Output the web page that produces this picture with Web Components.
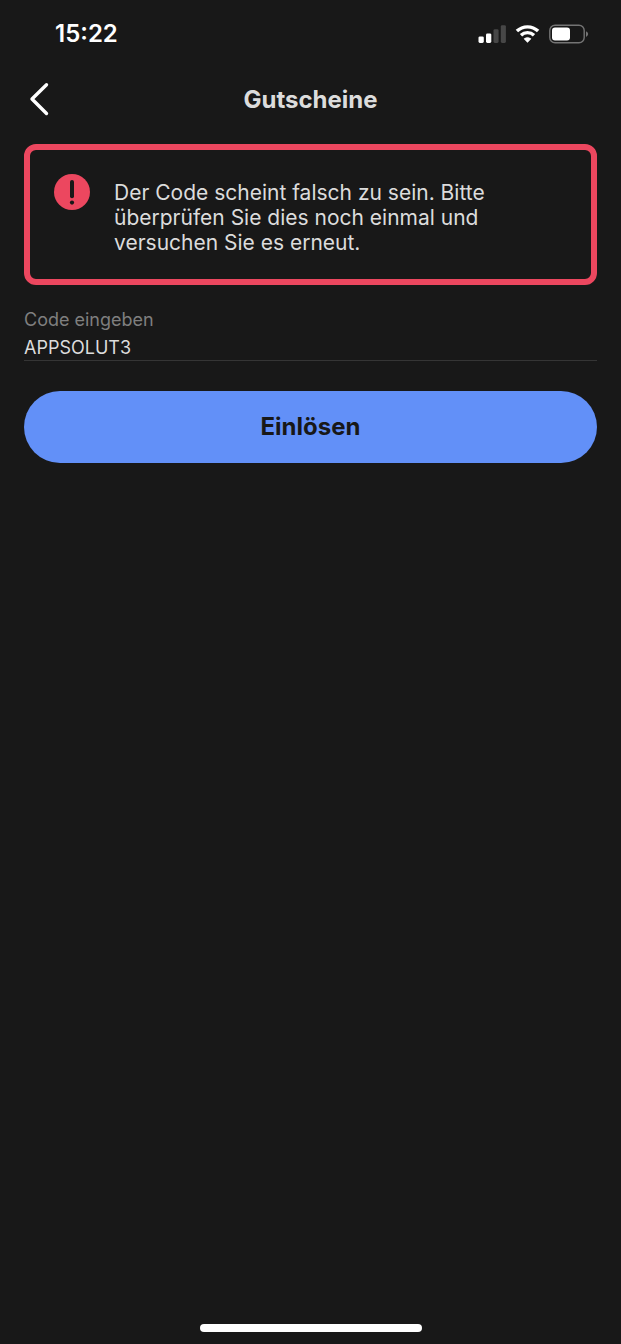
<!DOCTYPE html>
<html lang="de">
<head>
<meta charset="utf-8">
<meta name="viewport" content="width=device-width, initial-scale=1">
<title>Gutscheine</title>
<style>
html { background: #181818; }
body { margin: 0; font-family: Inter, "Liberation Sans", sans-serif; color: #dcdcdc; }
</style>
</head>
<body>
<voucher-screen>
  <status-bar slot="top">15:22</status-bar>
  <nav-header slot="top">Gutscheine</nav-header>
  <error-notice>Der Code scheint falsch zu sein. Bitte überprüfen Sie dies noch einmal und versuchen Sie es erneut.</error-notice>
  <code-field value="APPSOLUT3">Code eingeben</code-field>
  <primary-button>Einlösen</primary-button>
</voucher-screen>
<script>
const define = (name, html, setup) => {
  const template = document.createElement('template');
  template.innerHTML = html;
  customElements.define(name, class extends HTMLElement {
    constructor() {
      super();
      this.attachShadow({ mode: 'open' }).append(template.content.cloneNode(true));
    }
    connectedCallback() { if (setup) setup(this); }
  });
};

define('voucher-screen', `
<style>
:host { display: flex; flex-direction: column; min-height: 100vh; }
main { flex: 1; padding: 12px 24px 24px; }
footer { display: flex; justify-content: center; padding-bottom: 12px; }
.home { width: 222px; height: 8px; border-radius: 4px; background: #fff; }
</style>
<slot name="top"></slot>
<main><slot></slot></main>
<footer><div class="home"></div></footer>`);

define('status-bar', `
<style>
:host { display: flex; align-items: center; justify-content: space-between; height: 68px; padding: 0 32px 0 55px; color: #fff; font-size: 24px; font-weight: 600; line-height: 28px; }
.icons { display: flex; align-items: center; gap: 9px; }
svg { display: block; }
</style>
<span><slot></slot></span>
<div class="icons">
  <svg width="28" height="20" viewBox="0 0 28 20" fill="#fff" aria-hidden="true">
    <rect x="0.5" y="12.4" width="5.3" height="6.6" rx="1.4"/>
    <rect x="8" y="9.4" width="5.3" height="9.6" rx="1.4"/>
    <rect x="15.5" y="5.2" width="5.1" height="13.8" rx="1.4" fill="#474747"/>
    <rect x="22.8" y="1.2" width="5.1" height="17.8" rx="1.4" fill="#474747"/>
  </svg>
  <svg width="25" height="20" viewBox="0 0 25 20" aria-hidden="true">
    <g fill="none" stroke="#fff" stroke-width="3.4">
      <path d="M1.9 7.1A15.3 15.3 0 0 1 23.1 7.1"/>
      <path d="M6 11.2A9.5 9.5 0 0 1 19 11.2"/>
    </g>
    <path d="M9 14.8Q12.5 12 16 14.8L12.5 18.4Z" fill="#fff" stroke="#fff" stroke-width=".6" stroke-linejoin="round"/>
  </svg>
  <svg width="40" height="20" viewBox="0 0 40 20" aria-hidden="true">
    <rect x="0.8" y="1.3" width="34.4" height="17.4" rx="5.2" fill="none" stroke="#747474" stroke-width="1.4"/>
    <rect x="3" y="3.6" width="18" height="12.8" rx="3" fill="#fff"/>
    <path d="M37 7.3Q39.2 8.3 39.2 10T37 12.9Z" fill="#747474"/>
  </svg>
</div>`);

define('nav-header', `
<style>
:host { display: grid; grid-template-columns: 48px 1fr 48px; align-items: center; height: 64px; padding: 0 16px; }
button { width: 48px; height: 48px; padding: 0; border: 0; background: none; color: #fff; cursor: pointer; }
svg { display: block; }
h1 { margin: 0; text-align: center; font-size: 24px; font-weight: 700; line-height: 32px; }
</style>
<button type="button" aria-label="Zurück">
  <svg width="48" height="48" viewBox="0 0 48 48" fill="none" stroke="currentColor" stroke-width="3.4" stroke-linecap="round" stroke-linejoin="round" aria-hidden="true"><path d="M30.5 8.8L16 23L30.5 37.5"/></svg>
</button>
<h1><slot></slot></h1>`);

define('error-notice', `
<style>
:host { display: block; }
.box { display: flex; gap: 24px; padding: 24px; border: 6px solid #ec475f; border-radius: 12px; }
svg { flex: none; display: block; }
p { margin: 6px 0 0; max-width: 400px; font-size: 21px; line-height: 25px; }
</style>
<div class="box" role="alert">
  <svg width="36" height="36" viewBox="0 0 36 36" aria-hidden="true">
    <circle cx="18" cy="18" r="18" fill="#ec475f"/>
    <path d="M18 8.1V22.2" stroke="#181818" stroke-width="4" stroke-linecap="round"/>
    <circle cx="18" cy="28.6" r="2.1" fill="#181818"/>
  </svg>
  <p><slot></slot></p>
</div>`);

define('code-field', `
<style>
:host { display: block; margin-top: 23px; }
label { display: block; font-size: 18px; line-height: 24px; color: #7f7f7f; }
input { display: block; box-sizing: border-box; width: 100%; height: 29px; padding: 2px 0 0; border: 0; border-bottom: 1px solid #353535; border-radius: 0; outline: 0; background: none; color: #dcdcdc; font: inherit; font-size: 18px; line-height: 24px; }
</style>
<label for="code"><slot></slot></label>
<input id="code" type="text" autocomplete="off">`,
  host => { host.shadowRoot.querySelector('input').value = host.getAttribute('value') || ''; });

define('primary-button', `
<style>
:host { display: block; margin-top: 30px; }
button { display: block; width: 100%; height: 72px; padding: 0; border: 0; border-radius: 36px; background: #6290f8; color: #181818; font: inherit; font-size: 24px; font-weight: 700; line-height: 32px; cursor: pointer; }
</style>
<button type="button"><slot></slot></button>`);
</script>
</body>
</html>
